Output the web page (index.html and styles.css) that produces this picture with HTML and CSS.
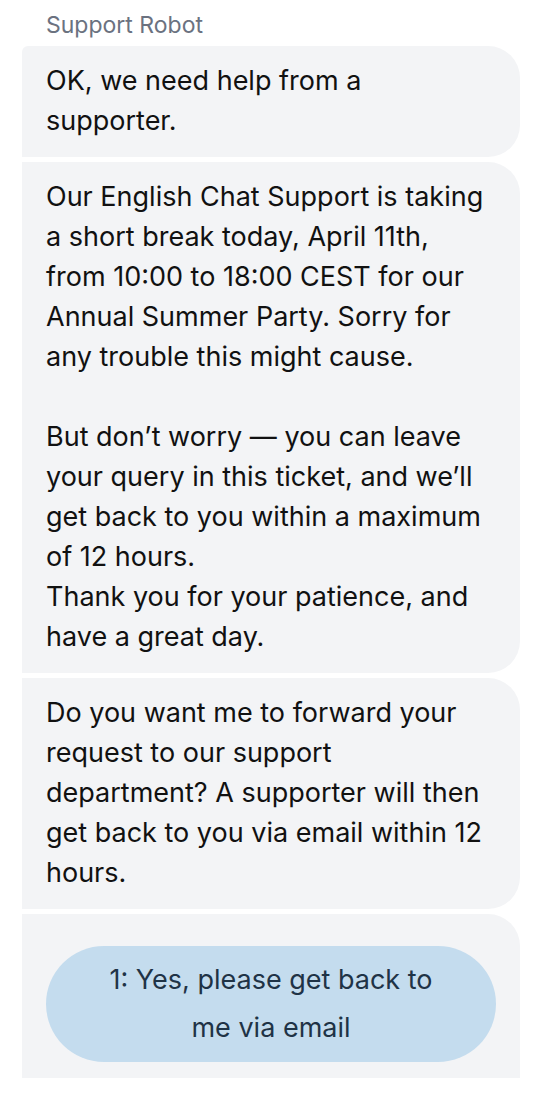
FILE: index.html
```html
<!DOCTYPE html>
<html lang="en">
<head>
    <meta charset="UTF-8">
    <meta name="viewport" content="width=device-width, initial-scale=1.0">
    <title>Support Chat</title>
    <link rel="stylesheet" href="styles.css">
</head>
<body>
    <div class="chat">
        <div class="sender">Support Robot</div>
        <div class="bubble first">OK, we need help from a supporter.</div>
        <div class="bubble">Our English Chat Support is taking a short break today, April 11th, from 10:00 to 18:00 CEST for our Annual Summer Party. Sorry for any trouble this might cause.<br><br>But don’t worry — you can leave your query in this ticket, and we’ll get back to you within a maximum of 12 hours.<br>Thank you for your patience, and have a great day.</div>
        <div class="bubble">Do you want me to forward your request to our support department? A supporter will then get back to you via email within 12 hours.</div>
        <div class="bubble options">
            <button class="option">1: Yes, please get back to me via email</button>
        </div>
    </div>
</body>
</html>
```

FILE: styles.css
```css
/* Page */
body {
    margin: 0;
    background-color: #fff;
    font-family: "Inter", "Noto Sans", sans-serif;
    color: #111;
}

/* Chat column */
.chat {
    display: flex;
    flex-direction: column;
    gap: 5px;
    padding: 10px 28px 0 22px;
}

/* Sender name above the bubbles */
.sender {
    color: #6b7280;
    font-size: 23px;
    line-height: 30px;
    padding-left: 24px;
}

/* Message bubbles */
.bubble {
    background-color: #f3f4f6;
    border-radius: 0 32px 32px 0;
    padding: 15px 26px 16px 24px;
    font-size: 27px;
    line-height: 40px;
}

.bubble.first {
    border-radius: 6px 32px 32px 0;
    margin-top: 1px;
}

/* Quick reply options */
.bubble.options {
    padding: 32px 24px 16px;
    border-radius: 0 32px 0 0;
}

.option {
    display: block;
    width: 100%;
    border: none;
    background-color: #c4dcee;
    color: #1f3346;
    border-radius: 58px;
    padding: 10px 54px;
    font-family: inherit;
    font-size: 27px;
    line-height: 48px;
    text-align: center;
}
```
